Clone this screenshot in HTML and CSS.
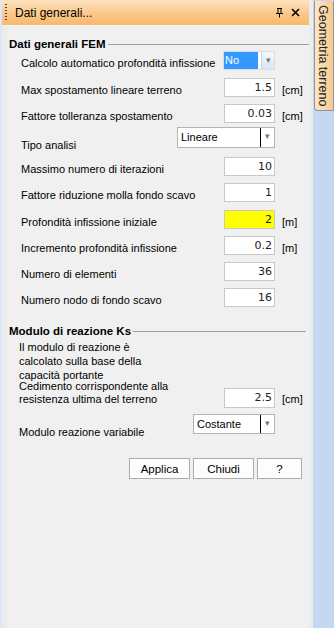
FILE: index.html
```html
<!DOCTYPE html>
<html lang="it">
<head>
    <meta charset="UTF-8">
    <title>Dati generali</title>
    <link rel="stylesheet" href="styles.css">
</head>
<body>

<div id="finestra">
    <div id="pannello">
        <div class="titolo">
            <span class="grip"></span>
            <span class="titolo-testo">Dati generali...</span>
            <span class="pin">
                <svg width="9" height="10" viewBox="0 0 9 10"><path d="M2 0.5h5M3 0.5v5M6 0.5v5M1 5.5h7M4.5 5.5v4" stroke="#000" stroke-width="1" fill="none"/></svg>
            </span>
            <span class="chiudi">
                <svg width="9" height="9" viewBox="0 0 9 9"><path d="M1 1l7 7M8 1l-7 7" stroke="#000" stroke-width="1.6"/></svg>
            </span>
        </div>

        <div class="contenuto">
            <div class="gruppo"><span>Dati generali FEM</span></div>

            <div class="riga r1">
                <label>Calcolo automatico profondità infissione</label>
                <div class="combo combo-no"><span class="scelta">No</span><span class="freccia">▾</span></div>
                <span class="unita"></span>
            </div>
            <div class="riga r2">
                <label>Max spostamento lineare terreno</label>
                <div class="campo">1.5</div>
                <span class="unita">[cm]</span>
            </div>
            <div class="riga r3">
                <label>Fattore tolleranza spostamento</label>
                <div class="campo">0.03</div>
                <span class="unita">[cm]</span>
            </div>
            <div class="riga r4">
                <label>Tipo analisi</label>
                <div class="combo combo-tipo"><span class="scelta">Lineare</span><span class="freccia sep">▾</span></div>
                <span class="unita"></span>
            </div>
            <div class="riga r5">
                <label>Massimo numero di iterazioni</label>
                <div class="campo">10</div>
                <span class="unita"></span>
            </div>
            <div class="riga">
                <label>Fattore riduzione molla fondo scavo</label>
                <div class="campo">1</div>
                <span class="unita"></span>
            </div>
            <div class="riga">
                <label>Profondità infissione iniziale</label>
                <div class="campo giallo">2</div>
                <span class="unita">[m]</span>
            </div>
            <div class="riga">
                <label>Incremento profondità infissione</label>
                <div class="campo">0.2</div>
                <span class="unita">[m]</span>
            </div>
            <div class="riga">
                <label>Numero di elementi</label>
                <div class="campo">36</div>
                <span class="unita"></span>
            </div>
            <div class="riga">
                <label>Numero nodo di fondo scavo</label>
                <div class="campo">16</div>
                <span class="unita"></span>
            </div>

            <div class="gruppo gruppo2"><span>Modulo di reazione Ks</span></div>

            <p class="nota">Il modulo di reazione è<br>calcolato sulla base della<br>capacità portante</p>

            <div class="riga riga-doppia">
                <label>Cedimento corrispondente alla<br>resistenza ultima del terreno</label>
                <div class="campo">2.5</div>
                <span class="unita">[cm]</span>
            </div>
            <div class="riga r-modulo">
                <label>Modulo reazione variabile</label>
                <div class="combo combo-modulo"><span class="scelta">Costante</span><span class="freccia sep">▾</span></div>
                <span class="unita"></span>
            </div>

            <div class="bottoni">
                <button class="btn-applica">Applica</button>
                <button class="btn-chiudi">Chiudi</button>
                <button class="btn-aiuto">?</button>
            </div>
        </div>
    </div>

    <div id="lato">
        <div class="linguetta">Geometria terreno</div>
    </div>
</div>

</body>
</html>
```

FILE: styles.css
```css
body {
    margin: 0;
    background-color: #c4d8f4;
    font-family: "Liberation Sans", Arial, sans-serif;
    font-size: 11px;
    color: #000;
}
#finestra {
    display: flex;
    width: 334px;
    height: 628px;
}
#pannello {
    width: 307px;
    height: 628px;
    background-color: #f0f0f0;
    border-left: 2px solid #dce7f5;
    border-right: 4px solid #ececec;
}
.titolo {
    height: 25px;
    display: flex;
    align-items: center;
    background: linear-gradient(#fde3c0, #fbc88a 55%, #f8b86c);
    border-bottom: 1px solid #f6f6f6;
    font-size: 12px;
}
.grip {
    width: 2px;
    height: 17px;
    margin-left: 3px;
    background-image: linear-gradient(#444 50%, transparent 50%);
    background-size: 2px 3px;
}
.titolo-testo {
    margin-left: 8px;
    flex: 1;
}
.pin {
    margin-right: 7px;
    display: flex;
}
.chiudi {
    margin-right: 9px;
    display: flex;
}
.contenuto {
    padding: 12px 0 0 2px;
    border-left: 5px solid #ececec;
    height: 590px;
}
.gruppo {
    display: flex;
    align-items: center;
    font-weight: bold;
    font-size: 11.5px;
    height: 12px;
}
.gruppo::after {
    content: "";
    flex: 1;
    height: 1px;
    background-color: #a0a0a0;
    margin-left: 2px;
}
.gruppo2 {
    margin-top: 14.5px;
}
.gruppo2::after {
    margin-right: 3px;
}
.riga {
    display: flex;
    align-items: center;
    height: 26.2px;
    padding-left: 12px;
    white-space: nowrap;
}
.riga label {
    flex: 1;
    padding-top: 5px;
}
.r1 {
    height: 20px;
}
.r2 {
    margin-top: 4px;
}
.r4 {
    height: 23px;
}
.r4 label {
    padding-top: 15px;
}
.r5 {
    margin-top: 3.5px;
    height: 27px;
}
.campo {
    width: 47px;
    height: 17px;
    border: 1px solid #c8c8c8;
    background-color: #fff;
    text-align: right;
    padding-right: 2px;
    line-height: 17px;
    font-family: "DejaVu Sans", sans-serif;
    font-size: 11px;
    color: #222;
}
.giallo {
    background-color: #ffff00;
}
.unita {
    width: 27px;
    padding-left: 7px;
    padding-top: 5px;
}
.combo {
    display: flex;
    height: 18px;
    border: 1px solid #b9c3d0;
    background-color: #fff;
    box-sizing: border-box;
}
.combo-no {
    width: 52px;
    height: 19px;
    border-color: #d8dde6;
}
.combo-no .scelta {
    background-color: #3399ff;
    color: #fff;
    width: 33px;
    line-height: 17px;
    padding-left: 1px;
    flex: none;
}
.combo-no .freccia {
    margin-left: 3px;
    background: linear-gradient(#f4f8fc, #dae6f3);
    border-left: 1px solid #c8d4e3;
}
.combo-tipo {
    width: 98px;
    height: 21px;
    border-color: #b4b4b4;
}
.combo-modulo {
    width: 82px;
    height: 20px;
    border-color: #b4b4b4;
}
.scelta {
    flex: 1;
    padding-left: 3px;
    line-height: 18px;
}
.freccia {
    width: 13px;
    font-size: 9px;
    color: #777;
    text-align: center;
    line-height: 16px;
}
.sep {
    border-left: 1px solid #000;
}
.nota {
    margin: 3px 0 0 10px;
    line-height: 14px;
}
.riga-doppia {
    height: 30px;
    margin-top: -2px;
    padding-left: 10px;
    align-items: flex-start;
}
.riga-doppia label {
    line-height: 13px;
    padding-top: 0;
}
.riga-doppia .campo {
    height: 18px;
    line-height: 18px;
    margin-top: 8px;
}
.riga-doppia .unita {
    padding-top: 13px;
}
.r-modulo {
    margin-top: 4px;
    height: 20px;
    padding-left: 10px;
}
.r-modulo label {
    padding-top: 15px;
}
.bottoni {
    display: flex;
    justify-content: flex-end;
    gap: 3px;
    margin-top: 24px;
    margin-right: 7px;
}
.bottoni button {
    height: 21px;
    background-color: #fdfdfd;
    border: 1px solid #adadad;
    font-family: "Liberation Sans", Arial, sans-serif;
    font-size: 11.5px;
    padding: 0;
    color: #000;
}
.btn-applica {
    width: 61px;
}
.btn-chiudi {
    width: 61px;
}
.btn-aiuto {
    width: 45px;
}
#lato {
    flex: 1;
    padding-top: 1px;
}
.linguetta {
    writing-mode: vertical-rl;
    width: 20px;
    height: 110px;
    margin-left: 1px;
    background: linear-gradient(to right, #fde6c6, #f9c98d);
    border: 1px solid #8c94a6;
    border-top: none;
    border-radius: 0 0 0 4px;
    font-size: 12.5px;
    line-height: 20px;
    padding-top: 4px;
    box-sizing: border-box;
    color: #222;
}
```
